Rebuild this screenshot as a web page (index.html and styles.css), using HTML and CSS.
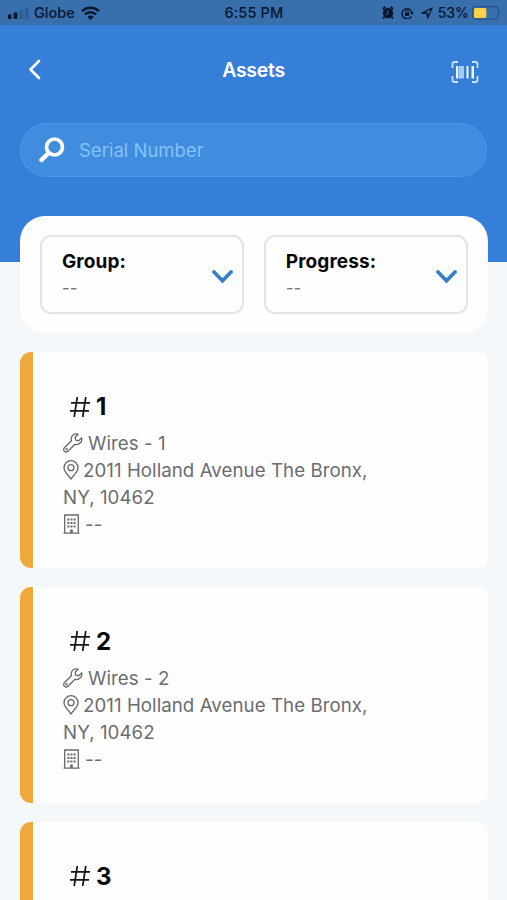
FILE: index.html
```html
<!DOCTYPE html>
<html lang="en">
<head>
<meta charset="utf-8">
<title>Assets</title>
<link rel="stylesheet" href="styles.css">
</head>
<body>
<svg class="defs" width="0" height="0">
  <symbol id="hash" viewBox="0 0 22 22"><path d="M8.3 1 5.2 21M16.8 1l-3.1 20M2 6.8h19M1 14.8h19"/></symbol>
  <symbol id="wrench" viewBox="0 0 20 20"><path d="M18.6 4.9 15.7 7.8l-2.9-.7-.7-2.9L15 1.2C12.700.5 10.100 1.200 8.900 3.300c-.9 1.500-.9 3-.5 4.400L1.400 14.700c-1 1-1 2.600 0 3.500s2.500 1 3.500 0l7.100-6.900c1.800.5 3.700.1 5.100-1.200 1.600-1.500 2-3.500 1.500-5.200z"/><circle cx="3.500" cy="16.200" r=".5"/></symbol>
  <symbol id="pin" viewBox="0 0 16 20"><path d="M8 19C6.500 16.500 1 12 1 7.700a7 7 0 0 1 14 0C15 12 9.500 16.500 8 19z"/><circle cx="8" cy="7.700" r="3"/></symbol>
  <symbol id="building" viewBox="0 0 17 20"><path d="M1.700 19V1h13.600v18M.5 19.200h16"/><path class="door" d="M7.200 15.500h2.600V19H7.200z"/><path class="windows" d="M5.400 4.500v9M8.500 4.500v9M11.600 4.500v9"/></symbol>
</svg>
<div class="screen">
  <header class="hero">
    <div class="status">
      <div class="carrier">
        <svg width="21" height="12" viewBox="0 0 21 12"><path d="M0 7.500h3.500V12H0zM5.600 5.500h3.700V12H5.600z" fill="#06152c"/><path d="M11.500 3H15v9h-3.500zM17 0h3.500v12H17z" fill="#2e5e98"/></svg>
        <span class="carrier-name">Globe</span>
        <svg class="wifi" width="19" height="14" viewBox="0 0 19 14"><path d="M1 5.200a12 12 0 0 1 17 0M4 8.400a7.800 7.800 0 0 1 11 0" fill="none" stroke="#06152c" stroke-width="2.500"/><path d="M6.300 10.700a4.600 4.600 0 0 1 6.400 0L9.500 14z" fill="#06152c"/></svg>
      </div>
      <span class="time">6:55 PM</span>
      <div class="indicators">
        <svg width="12" height="13" viewBox="0 0 12 13"><circle cx="6" cy="7" r="5.200" fill="#06152c"/><path d="M.7 3 3.400.8M11.300 3 8.600.8M2.300 11 1 12.500M9.700 11l1.300 1.500" stroke="#06152c" stroke-width="2"/><path d="M6 4v3.300L3.800 8.600" fill="none" stroke="#386fad"/></svg>
        <svg class="lock" width="13" height="12" viewBox="0 0 13 12"><path d="M10.300 9.300A5 5 0 1 1 11 6" fill="none" stroke="#06152c" stroke-width="1.400"/><path d="M9 5.500h4L11 8z" fill="#06152c"/><path d="M4 5.500h4.200v3.300H4z" fill="#06152c"/><path d="M4.800 5.600V4.500a1.300 1.300 0 0 1 2.600 0v1.100" fill="none" stroke="#06152c"/></svg>
        <svg class="arrow" width="12" height="12" viewBox="0 0 12 12"><path d="M1 6 11 1 6.600 11 6 6z" fill="none" stroke="#06152c" stroke-width="1.300" stroke-linejoin="round"/></svg>
        <span class="percent">53%</span>
        <svg class="battery" width="30" height="14" viewBox="0 0 30 14"><rect x=".6" y=".6" width="25.600" height="12.600" rx="3.500" fill="none" stroke="#285184" stroke-width="1.100"/><rect x="2" y="2" width="12.300" height="10" rx="1.500" fill="#fdd04a"/><path d="M27.700 4.800q1.700 2.200 0 4.400z" fill="#285184"/></svg>
      </div>
    </div>
    <nav class="navbar">
      <svg class="back" width="13" height="21" viewBox="0 0 13 21"><path d="M11 2 2.500 10.500 11 19" fill="none" stroke="#fff" stroke-width="2.700" stroke-linecap="round" stroke-linejoin="round"/></svg>
      <h1>Assets</h1>
      <svg class="scan" width="28" height="22" viewBox="0 0 28 22"><path d="M7 1H3.500Q1.500 1 1.500 3v4M21 1h3.500q2 0 2 2v4M7 21H3.500q-2 0-2-2v-4M21 21h3.500q2 0 2-2v-4" fill="none" stroke="#c9e1fb" stroke-width="1.800"/><path d="M5 5h2v12.500H5zM15.500 5h2v12.500h-2zM20.500 5h2.500v12.500h-2.500z" fill="#eef7ff"/><path d="M7.500 5h5.500v12.500H7.500z" fill="#a5cdf6"/></svg>
    </nav>
    <div class="search">
      <svg width="26" height="26" viewBox="0 0 26 26"><circle cx="15.500" cy="10" r="8" fill="none" stroke="#fff" stroke-width="3.700"/><path d="M9.500 16 2.500 23" stroke="#fff" stroke-width="4.500" stroke-linecap="round"/></svg>
      <span>Serial Number</span>
    </div>
  </header>
  <main>
    <section class="filters">
      <div class="select"><div><b>Group:</b><span>--</span></div><svg width="21" height="14" viewBox="0 0 21 14"><path d="m2 2 8.500 8.800L19 2" fill="none" stroke="#3b7fca" stroke-width="3.800" stroke-linecap="round"/></svg></div>
      <div class="select"><div><b>Progress:</b><span>--</span></div><svg width="21" height="14" viewBox="0 0 21 14"><path d="m2 2 8.500 8.800L19 2" fill="none" stroke="#3b7fca" stroke-width="3.800" stroke-linecap="round"/></svg></div>
    </section>
    <article class="card">
      <h2><svg class="hash"><use href="#hash"/></svg>1</h2>
      <p class="type"><svg class="wrench"><use href="#wrench"/></svg>Wires - 1</p>
      <p class="address"><svg class="pin"><use href="#pin"/></svg>2011 Holland Avenue The Bronx,<br>NY, 10462</p>
      <p><svg class="building"><use href="#building"/></svg>--</p>
    </article>
    <article class="card">
      <h2><svg class="hash"><use href="#hash"/></svg>2</h2>
      <p class="type"><svg class="wrench"><use href="#wrench"/></svg>Wires - 2</p>
      <p class="address"><svg class="pin"><use href="#pin"/></svg>2011 Holland Avenue The Bronx,<br>NY, 10462</p>
      <p><svg class="building"><use href="#building"/></svg>--</p>
    </article>
    <article class="card">
      <h2><svg class="hash"><use href="#hash"/></svg>3</h2>
    </article>
  </main>
</div>
</body>
</html>
```
FILE: styles.css
```css
* { box-sizing: border-box; }
body { margin: 0; font-family: Inter, "Liberation Sans", sans-serif; background: #f4f8fb; }
.defs { position: absolute; }
.screen { height: 900px; overflow: hidden; }
svg { flex: none; }
h1, h2, p { margin: 0; }
.hero { height: 262px; background: #367fd8; }
.status { height: 25px; display: grid; grid-template-columns: 1fr auto 1fr; align-items: center; padding: 0 5px 0 8px; background: #386fad; color: #06152c; font-size: 14.5px; font-weight: 500; }
.carrier, .indicators { display: flex; align-items: center; }
.carrier-name { margin: 0 6px 0 5px; }
.time { margin-right: 2px; letter-spacing: .15px; }
.indicators { justify-content: flex-end; }
.lock { margin-left: 7px; }
.arrow { margin-left: 7px; }
.percent { margin: 0 3px 0 5px; font-size: 14px; }
.navbar { height: 98px; display: grid; grid-template-columns: 1fr auto 1fr; align-items: center; padding: 0 28px 9px; color: #fff; }
.navbar h1 { font-size: 19.5px; font-weight: 600; letter-spacing: -.3px; }
.scan { justify-self: end; margin-top: 5px; }
.search { height: 54px; margin: 0 20px; padding-left: 18px; display: flex; align-items: center; gap: 14px; border: 1px solid #4a98e6; border-radius: 27px; background: #408de0; color: #86c1f6; font-size: 18.5px; }
main { margin-top: -46px; padding: 0 19.500px 0 20px; position: relative; }
.filters { height: 117px; padding: 19px 20px 0; display: grid; grid-template-columns: 1fr 1fr; gap: 20px; align-items: start; border-radius: 25px; background: #fefefe; }
.select { height: 79px; padding: 0 9px 0 20px; display: flex; align-items: center; justify-content: space-between; border: 2px solid #e4e4e6; border-radius: 11px; }
.select b, .select span { display: block; line-height: 27px; }
.select b { font-size: 19px; font-weight: 700; letter-spacing: .1px; color: #080808; }
.select span { color: #777; font-size: 17px; }
.select div { margin-top: 1px; }
.select svg { margin-top: 5px; }
.card { height: 216px; margin-top: 18.700px; padding: 40px 30px 0; border-left: 13px solid #eea93a; border-radius: 11px; background: #fefefe; color: #6c6c6e; font-size: 18.700px; letter-spacing: .05px; }
.filters + .card { margin-top: 19.300px; }
.card h2 { display: flex; align-items: center; gap: 5px; height: 29px; margin: 0 0 9px 6px; color: #050505; font-size: 24px; font-weight: 700; }
.card p { line-height: 27px; }
.card svg { fill: none; stroke: #68686a; stroke-width: 1.300; }
.card .hash { width: 22px; height: 22px; stroke: #151515; stroke-width: 1.700; }
.wrench { width: 20px; height: 20px; margin-right: 5px; vertical-align: -3px; }
.pin { width: 16px; height: 20px; margin-right: 4px; vertical-align: -3px; }
.building { width: 17px; height: 20px; margin-right: 5px; vertical-align: -3px; }
.windows { stroke-width: 2; stroke-dasharray: 2 1.500; }
.door { fill: #68686a; stroke: none; }
```
